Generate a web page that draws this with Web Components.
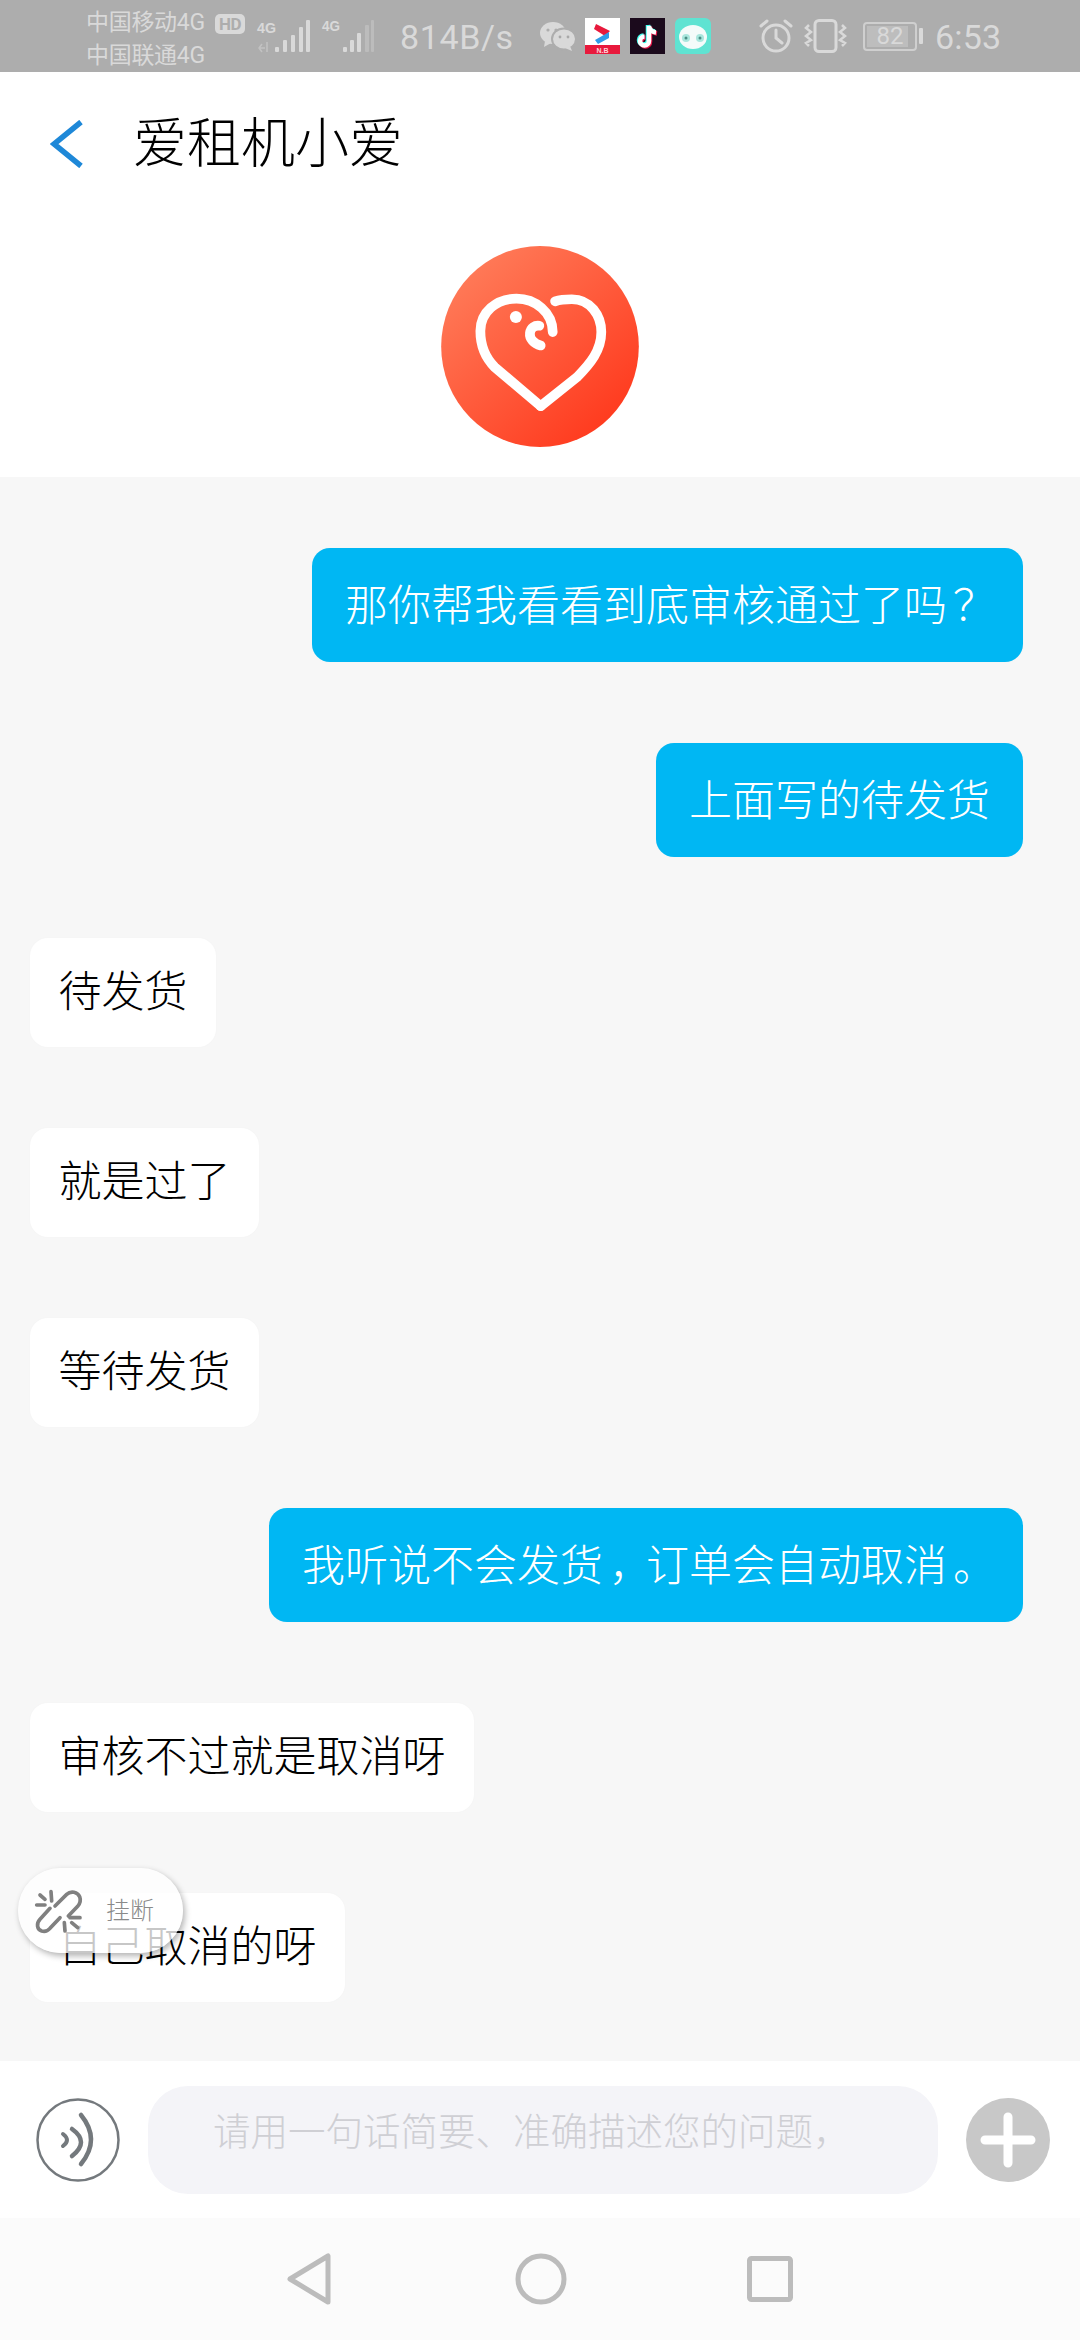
<!DOCTYPE html>
<html lang="zh">
<head>
<meta charset="utf-8">
<title>爱租机小爱</title>
<style>
    html, body { margin: 0; padding: 0; }
    body { width: 1080px; height: 2340px; overflow: hidden; font-family: Roboto, "Noto Sans CJK SC", sans-serif; }
    chat-page { height: 2340px; }
    /* the reference's font sets this punctuation nearer the middle of its cell */
    .punct { margin-left: 6px; letter-spacing: -6px; }
</style>
</head>
<body>
<chat-page>
    <status-bar></status-bar>
    <app-header title="爱租机小爱"></app-header>
    <chat-list>
        <chat-bubble mine>那你帮我看看到底审核通过了吗<span class="punct">？</span></chat-bubble>
        <chat-bubble mine>上面写的待发货</chat-bubble>
        <chat-bubble>待发货</chat-bubble>
        <chat-bubble>就是过了</chat-bubble>
        <chat-bubble>等待发货</chat-bubble>
        <chat-bubble mine>我听说不会发货<span class="punct">，</span>订单会自动取消<span class="punct">。</span></chat-bubble>
        <chat-bubble>审核不过就是取消呀</chat-bubble>
        <chat-bubble>自己取消的呀</chat-bubble>
        <hangup-pill slot="over"></hangup-pill>
    </chat-list>
    <chat-composer placeholder="请用一句话简要、准确描述您的问题，"></chat-composer>
    <nav-bar></nav-bar>
</chat-page>

<script>
class ChatPage extends HTMLElement {
    constructor() {
        super();
        this.attachShadow({mode: 'open'});
        this.shadowRoot.innerHTML = `
            <style>
                :host { display: flex; flex-direction: column; width: 1080px; background: #fff; }
            </style>
            <slot></slot>
        `;
    }
}

class StatusBar extends HTMLElement {
    constructor() {
        super();
        this.attachShadow({mode: 'open'});
        this.shadowRoot.innerHTML = `
            <style>
                :host { display: flex; align-items: center; flex: none; height: 72px; padding-left: 86px; box-sizing: border-box;
                    background: #adadad; color: #d9d9d9; font-family: Roboto, "Noto Sans CJK SC", sans-serif; overflow: hidden; }
                svg { display: block; flex: none; }
                .carrier { width: 122px; font-size: 23px; line-height: 33px; white-space: nowrap; padding-top: 5px; margin-right: 7px; letter-spacing: -.3px; }
                .hd { width: 30px; height: 20px; border-radius: 5px; background: #d9d9d9; color: #adadad;
                    font: 700 17px/20px Roboto, sans-serif; text-align: center; margin: -24px 11px 0 0; letter-spacing: -.5px; }
                .speed { font-size: 34px; line-height: 40px; margin: 2px 0 0 26px; width: 116px; white-space: nowrap; letter-spacing: .6px; }
                .apps { display: flex; align-items: center; margin-left: 24px; }
                .batt { position: relative; width: 54px; height: 29px; margin-left: 16px; box-sizing: border-box;
                    border: 2px solid #cfcfcf; border-radius: 4px; text-align: center;
                    font-size: 24px; line-height: 25px; color: #d9d9d9; }
                .batt span { position: relative; }
                .batt::before { content: ''; position: absolute; left: 2px; top: 2px; bottom: 2px; width: 41px; background: #bdbdbd; }
                .tip { width: 4px; height: 16px; background: #d9d9d9; margin-left: 2px; border-radius: 1px; }
                .time { font-size: 34px; line-height: 40px; margin: 2px 0 0 12px; letter-spacing: .2px; }
            </style>
            <div class="carrier">中国移动4G<br>中国联通4G</div>
            <div class="hd">HD</div>
            <svg width="118" height="72" viewBox="0 0 118 72">
                <text x="1" y="33" font-family="Liberation Sans, sans-serif" font-weight="700" font-size="15" fill="#d9d9d9" textLength="19" lengthAdjust="spacingAndGlyphs">4G</text>
                <path d="M4 48h5M6 44l-3 4 3 4M11 42v10" stroke="#c2c2c2" stroke-width="1.5" fill="none"/>
                <g fill="#d9d9d9">
                    <rect x="19" y="47" width="4" height="5" rx="1"/><rect x="27" y="40" width="4" height="12" rx="1"/>
                    <rect x="35" y="35" width="4" height="17" rx="1"/><rect x="43" y="27" width="4" height="25" rx="1"/>
                    <rect x="50" y="20" width="4" height="32" rx="1"/>
                </g>
                <text x="66" y="31" font-family="Liberation Sans, sans-serif" font-weight="700" font-size="15" fill="#d9d9d9" textLength="18" lengthAdjust="spacingAndGlyphs">4G</text>
                <g fill="#d9d9d9">
                    <rect x="87" y="47" width="4" height="5" rx="1"/><rect x="94" y="40" width="4" height="12" rx="1"/>
                    <rect x="101" y="33" width="4" height="19" rx="1"/>
                </g>
                <g fill="#bcbcbc">
                    <rect x="109" y="25" width="4" height="27" rx="1"/><rect x="115" y="20" width="3" height="32" rx="1"/>
                </g>
            </svg>
            <div class="speed">814B/s</div>
            <div class="apps">
                <svg width="36" height="30" viewBox="0 0 36 30" style="margin-right:9px">
                    <ellipse cx="13" cy="12" rx="13" ry="11" fill="#d9d9d9"/>
                    <path d="M5 20l-1 6 7-4z" fill="#d9d9d9"/>
                    <ellipse cx="24" cy="18" rx="12" ry="10.5" fill="#d9d9d9" stroke="#adadad" stroke-width="2"/>
                    <path d="M30 25l2 5-7-3z" fill="#d9d9d9"/>
                    <g fill="#adadad"><circle cx="8" cy="9" r="1.6"/><circle cx="16" cy="9" r="1.6"/></g>
                    <g fill="#a8a8a8"><circle cx="20" cy="16" r="1.4"/><circle cx="28" cy="16" r="1.4"/></g>
                </svg>
                <svg width="35" height="36" viewBox="0 0 35 36" style="margin-right:10px">
                    <rect width="35" height="36" fill="#fff"/>
                    <rect y="27" width="35" height="9" fill="#e8193c"/>
                    <path d="M11 6l14 7-5 5-11-7z" fill="#e8193c"/>
                    <path d="M24 14l-14 8 3 4 11-6z" fill="#2f9be8"/>
                    <text x="17.5" y="34.5" text-anchor="middle" font-family="Liberation Sans, sans-serif" font-size="7" font-weight="700" fill="#ffd0d8">N.B</text>
                </svg>
                <svg width="35" height="36" viewBox="0 0 35 36" style="margin-right:10px">
                    <rect width="35" height="36" fill="#1b0a1c"/>
                    <path d="M19 8v15a4.5 4.5 0 1 1-4.5-4.5M19 8c.5 4 3 6 7 6.5" fill="none" stroke="#e8174a" stroke-width="4.5" transform="translate(1 1)"/>
                    <path d="M19 8v15a4.5 4.5 0 1 1-4.5-4.5M19 8c.5 4 3 6 7 6.5" fill="none" stroke="#4fe" stroke-width="4.5" transform="translate(-1 -1)"/>
                    <path d="M19 8v15a4.5 4.5 0 1 1-4.5-4.5M19 8c.5 4 3 6 7 6.5" fill="none" stroke="#fff" stroke-width="4.5"/>
                </svg>
                <svg width="36" height="36" viewBox="0 0 36 36">
                    <rect width="36" height="36" rx="6" fill="#5fe3d2"/>
                    <ellipse cx="18" cy="19" rx="14" ry="12" fill="#f4fbfa"/>
                    <circle cx="11" cy="20" r="4" fill="#a9e6dd"/><circle cx="25" cy="20" r="4" fill="#a9e6dd"/>
                    <circle cx="11" cy="20" r="1.5" fill="#4a8f86"/><circle cx="25" cy="20" r="1.5" fill="#4a8f86"/>
                </svg>
                <svg width="34" height="34" viewBox="0 0 34 34" style="margin-left:48px" fill="none" stroke="#d9d9d9" stroke-width="3">
                    <circle cx="17" cy="19" r="13"/>
                    <path d="M17 11v8l6 5M2 7l6-5M32 7l-6-5" stroke-linecap="round"/>
                </svg>
                <svg width="43" height="34" viewBox="0 0 43 34" style="margin-left:11px" fill="none" stroke="#d9d9d9" stroke-width="2.5">
                    <rect x="11" y="1.5" width="21" height="31" rx="4" stroke-width="3"/>
                    <path d="M5 6l-3 3 5 4-5 4 5 4-5 3 3 3M38 6l3 3-5 4 5 4-5 4 5 3-3 3"/>
                </svg>
                <div class="batt"><span>82</span></div>
                <div class="tip"></div>
            </div>
            <div class="time">6:53</div>
        `;
    }
}

class AppHeader extends HTMLElement {
    constructor() {
        super();
        this.attachShadow({mode: 'open'});
    }
    connectedCallback() {
        this.shadowRoot.innerHTML = `
            <style>
                :host { display: block; flex: none; height: 405px; background: #fff; }
                .bar { display: flex; align-items: center; height: 143px; padding-left: 50px; }
                .title { margin-left: 49px; padding-bottom: 8px; font: 300 54px/60px "Noto Sans CJK SC", sans-serif; color: #000; }
                .avatar { display: block; margin: 31px auto 0; }
            </style>
            <div class="bar">
                <svg width="34" height="48" viewBox="0 0 34 48" fill="none"><path d="M31 2L4 24l27 22" stroke="#1e88d8" stroke-width="5.5"/></svg>
                <div class="title">${this.getAttribute('title')}</div>
            </div>
            <svg class="avatar" width="198" height="201" viewBox="65 48 590 600">
                <defs>
                    <linearGradient id="g" x1="0.15" y1="0.1" x2="0.85" y2="0.9">
                        <stop offset="0" stop-color="#ff7a58"/><stop offset="1" stop-color="#ff3a1e"/>
                    </linearGradient>
                </defs>
                <ellipse cx="360" cy="348" rx="295" ry="300" fill="url(#g)"/>
                <g fill="none" stroke="#fff" stroke-width="29" stroke-linecap="round" stroke-linejoin="round">
                    <path d="M362 526L225 410C195 380 182 345 182 302C182 245 230 205 290 205C345 205 398 245 398 305"/>
                    <path d="M405 213C420 208 440 207 455 207C510 207 543 255 543 305C543 360 510 400 470 440L362 526"/>
                    <path d="M362 345C342 340 328 325 330 308C332 292 345 284 358 286"/>
                </g>
                <circle cx="288" cy="260" r="18" fill="#fff"/>
            </svg>
        `;
    }
}

class ChatList extends HTMLElement {
    constructor() {
        super();
        this.attachShadow({mode: 'open'});
        this.shadowRoot.innerHTML = `
            <style>
                :host { display: flex; flex-direction: column; flex: none; height: 1584px; box-sizing: border-box;
                    padding: 71px 57px 0 30px; gap: 81px; background: #f7f7f7; position: relative; }
                .over { position: absolute; left: 18px; top: 1391px; }
            </style>
            <slot></slot>
            <div class="over"><slot name="over"></slot></div>
        `;
    }
}

class ChatBubble extends HTMLElement {
    constructor() {
        super();
        this.attachShadow({mode: 'open'});
        this.shadowRoot.innerHTML = `
            <style>
                :host { display: block; align-self: flex-start; box-sizing: border-box; height: 109px; padding: 0 28.5px;
                    background: #fff; color: #000; border-radius: 18px; box-shadow: 0 0 3px rgba(0,0,0,.02);
                    font: 300 43px/101px "Noto Sans CJK SC", sans-serif; white-space: nowrap; }
                :host([mine]) { align-self: flex-end; height: 114px; padding: 0 33px; background: #00b7f3; color: #fff; line-height: 109px; }
            </style>
            <slot></slot>
        `;
    }
}

class HangupPill extends HTMLElement {
    constructor() {
        super();
        this.attachShadow({mode: 'open'});
        this.shadowRoot.innerHTML = `
            <style>
                :host { display: flex; align-items: center; width: 165px; height: 85px; box-sizing: border-box; padding-left: 7px;
                    border-radius: 43px; background: rgba(255,255,255,.78); box-shadow: 2px 3px 6px rgba(0,0,0,.3); }
                span { margin-left: 11px; padding-bottom: 4px; font: 300 24px/30px "Noto Sans CJK SC", sans-serif; color: #8a8a8a; white-space: nowrap; }
                svg { flex: none; display: block; }
            </style>
            <svg width="70" height="60" viewBox="0 0 210 180" fill="none" stroke="#808080" stroke-width="11" stroke-linecap="round">
                <path d="M90 75L125 40C138 28 158 33 164 47C168 58 165 68 158 76L130 105"/>
                <path d="M75 82L45 115C33 128 36 145 50 150C60 153 68 150 75 142L105 110"/>
                <path d="M35 72H60M78 32L80 60M45 42L60 55M135 110H165M118 125L120 150M140 125L158 140"/>
            </svg>
            <span>挂断</span>
        `;
    }
}

class ChatComposer extends HTMLElement {
    constructor() {
        super();
        this.attachShadow({mode: 'open'});
    }
    connectedCallback() {
        this.shadowRoot.innerHTML = `
            <style>
                :host { display: flex; align-items: center; flex: none; height: 157px; box-sizing: border-box; padding: 0 30px 0 36px; background: #fff; }
                svg { flex: none; display: block; }
                .input { flex: 1; height: 108px; margin: 0 28px; box-sizing: border-box; padding-left: 65px; border-radius: 40px; background: #f4f4f8;
                    color: #cfcfd4; font: 300 37.5px/86px "Noto Sans CJK SC", sans-serif; white-space: nowrap; }
            </style>
            <svg width="84" height="84" viewBox="0 0 84 84" fill="none" stroke="#74797d" stroke-linecap="round">
                <circle cx="42" cy="42" r="40.5" stroke-width="2.5"/>
                <path d="M45 17Q65 41.5 45 66" stroke-width="4.5"/>
                <path d="M36 31Q54 44 36 58" stroke-width="4.5"/>
                <path d="M27 36Q35 42 27 48" stroke-width="4"/>
            </svg>
            <div class="input">${this.getAttribute('placeholder')}</div>
            <svg width="84" height="84" viewBox="0 0 84 84">
                <circle cx="42" cy="42" r="42" fill="#c8c8c8"/>
                <path d="M42 19v46M19 42h46" stroke="#fff" stroke-width="9" stroke-linecap="round"/>
            </svg>
        `;
    }
}

class NavBar extends HTMLElement {
    constructor() {
        super();
        this.attachShadow({mode: 'open'});
        this.shadowRoot.innerHTML = `
            <style>
                :host { display: flex; align-items: center; flex: none; height: 122px; box-sizing: border-box; padding-left: 286px; background: #fbfbfb; }
                svg { flex: none; display: block; }
            </style>
            <svg width="46" height="52" viewBox="0 0 46 52" fill="none" stroke="#bcbcbc" stroke-width="5" stroke-linejoin="round">
                <path d="M42 3v46L4 26z"/>
            </svg>
            <svg width="52" height="52" viewBox="0 0 52 52" fill="none" stroke="#bcbcbc" stroke-width="5" style="margin-left:183px">
                <circle cx="26" cy="26" r="23"/>
            </svg>
            <svg width="46" height="46" viewBox="0 0 46 46" fill="none" stroke="#bcbcbc" stroke-width="5" stroke-linejoin="round" style="margin-left:180px">
                <rect x="2.5" y="2.5" width="41" height="41" rx="2"/>
            </svg>
        `;
    }
}

customElements.define('chat-page', ChatPage);
customElements.define('status-bar', StatusBar);
customElements.define('app-header', AppHeader);
customElements.define('chat-list', ChatList);
customElements.define('chat-bubble', ChatBubble);
customElements.define('hangup-pill', HangupPill);
customElements.define('chat-composer', ChatComposer);
customElements.define('nav-bar', NavBar);
</script>
</body>
</html>
